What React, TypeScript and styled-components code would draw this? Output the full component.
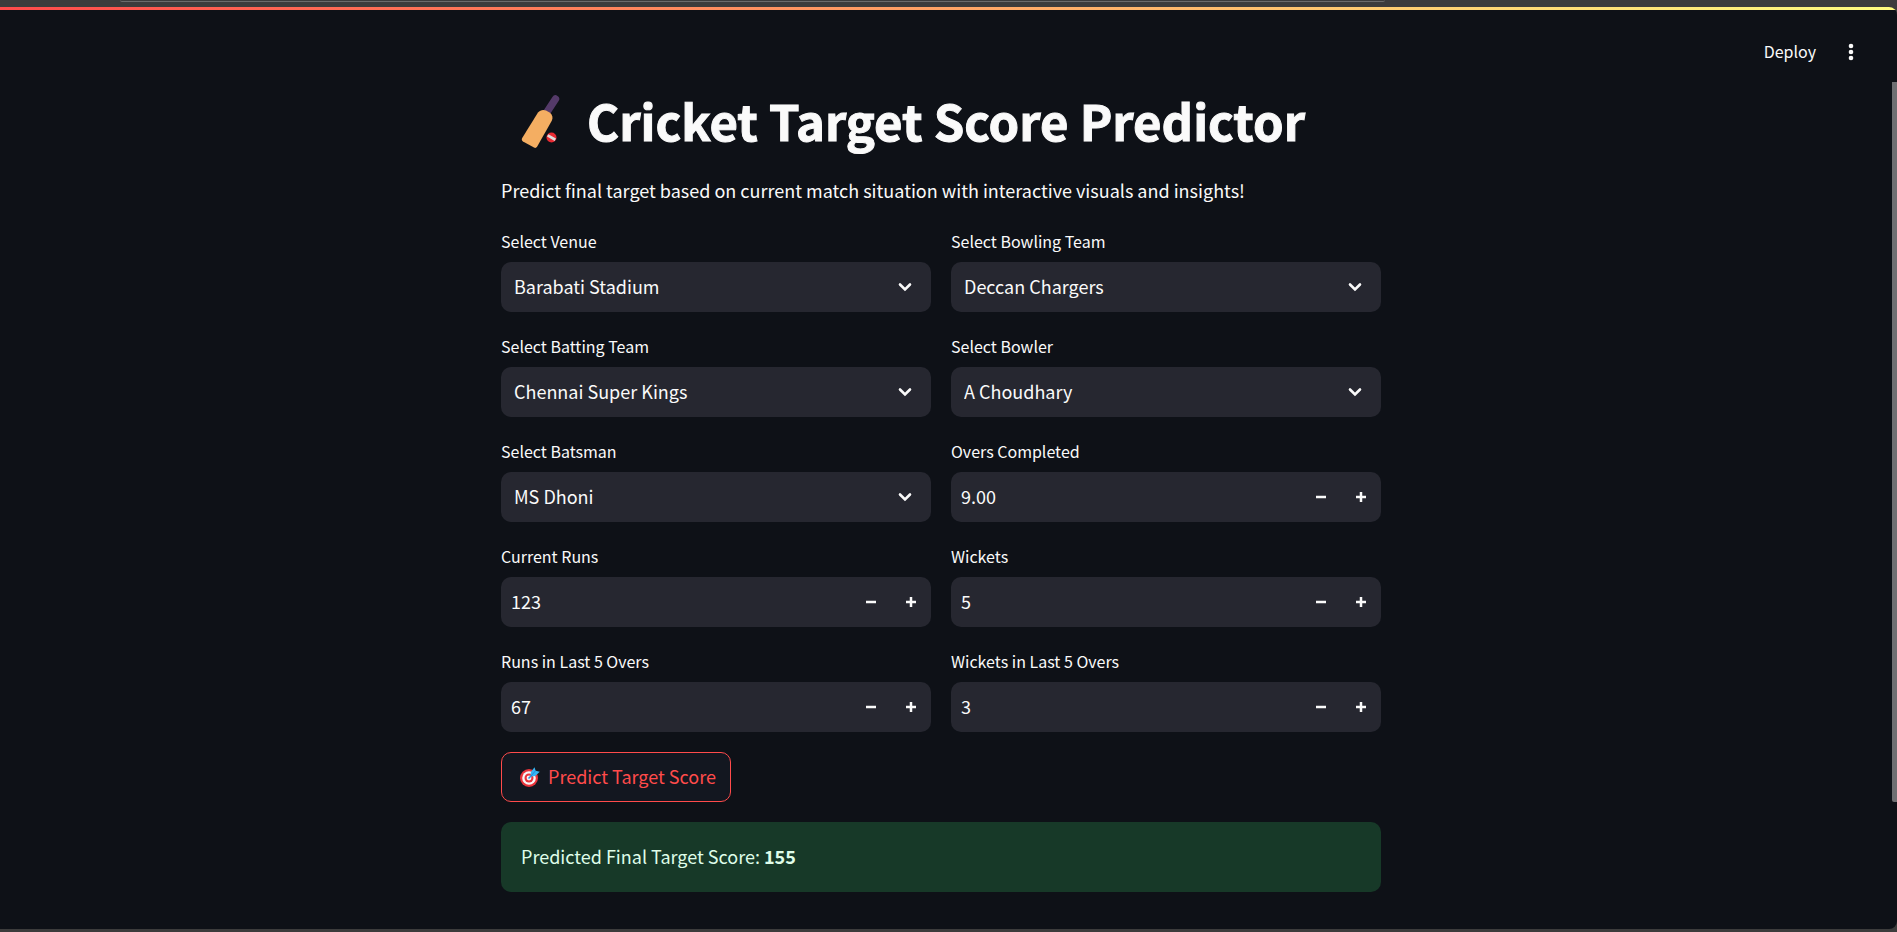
import React, { useId, useState } from "react";
import styled, { createGlobalStyle } from "styled-components";

const GlobalStyle = createGlobalStyle`
  *, *::before, *::after { box-sizing: border-box; }
  body {
    margin: 0;
    background: #3c3c3c;
    color: #fafafa;
    font-family: "Noto Sans CJK SC", "Noto Sans", sans-serif;
    font-size: 18px;
    line-height: 30px;
  }
  button, input, select { font: inherit; color: inherit; }
`;

const Window = styled.div`
  min-height: 100vh;
  display: flex;
  flex-direction: column;
  padding-bottom: 3px;
`;

const BrowserStrip = styled.div`
  height: 7px;
  padding: 0 512px 0 120px;
`;

const AddressBar = styled.div`
  height: 2px;
  border-bottom: 1px solid #6b6b6b;
  border-radius: 0 0 8px 8px;
`;

const Page = styled.div`
  flex: 1;
  display: flex;
  flex-direction: column;
  background: #0e1117;
  border-radius: 0 8px 8px 0;
  overflow: hidden;
`;

const Decoration = styled.div`
  height: 3px;
  background: linear-gradient(90deg, #ff4b4b, #fffd80);
`;

const Toolbar = styled.header`
  height: 72px;
  display: flex;
  align-items: center;
  justify-content: flex-end;
  gap: 23px;
  padding: 12px 34px 0 0;
`;

const ToolbarButton = styled.button`
  border: 0;
  background: none;
  padding: 0 0 2px;
  font-size: 16px;
  line-height: 24px;
  cursor: pointer;
`;

const MenuButton = styled(ToolbarButton)`
  width: 24px;
  height: 24px;
  padding: 0;
`;

const Body = styled.div`
  flex: 1;
  display: flex;
`;

const ScrollRail = styled.div`
  width: 5px;
`;

const ScrollThumb = styled.div`
  height: 85%;
  background: #6f6f72;
  border-radius: 0 0 0 2px;
`;

const Main = styled.main`
  flex: 1;
  padding: 0 30px 37px 20px;
`;

const Block = styled.div`
  max-width: 880px;
  margin: 0 auto;
  display: flex;
  flex-direction: column;
  align-items: flex-start;
  gap: 20px;
`;

const Title = styled.h1`
  margin: 0;
  height: 73px;
  padding: 3px 0 0 18px;
  display: flex;
  align-items: center;
  gap: 26px;
  font-size: 49px;
  line-height: 66px;
  font-weight: 700;
  -webkit-text-stroke: 1px #fafafa;
  white-space: nowrap;

  svg { -webkit-text-stroke: 0; }
`;

const Intro = styled.p`
  margin: 0 0 2px;
`;

const Fields = styled.div`
  width: 100%;
  display: grid;
  grid-template-columns: 1fr 1fr;
  gap: 20px;
`;

const Label = styled.label`
  display: block;
  margin-bottom: 7px;
  font-size: 16px;
  line-height: 28px;
`;

const Control = styled.div`
  height: 50px;
  display: flex;
  align-items: center;
  background: #262730;
  border-radius: 10px;
  overflow: hidden;
`;

const SelectControl = styled(Control)`
  display: grid;
  grid-template-columns: 1fr 52px;

  svg {
    grid-area: 1 / 2;
    justify-self: center;
    pointer-events: none;
  }
`;

const Select = styled.select`
  grid-area: 1 / 1 / 2 / 3;
  height: 50px;
  appearance: none;
  border: 0;
  outline: 0;
  background: none;
  padding: 0 52px 2px 13px;

  option { background: #262730; }
`;

const NumberInput = styled.input`
  flex: 1;
  min-width: 0;
  height: 50px;
  border: 0;
  outline: 0;
  background: none;
  padding: 0 10px 2px;
  appearance: textfield;

  &::-webkit-inner-spin-button { display: none; }
`;

const StepButton = styled.button`
  width: 40px;
  height: 50px;
  display: flex;
  align-items: center;
  justify-content: center;
  border: 0;
  padding: 0;
  background: none;
  cursor: pointer;
`;

const PredictButton = styled.button`
  height: 50px;
  display: flex;
  align-items: center;
  gap: 7px;
  padding: 0 14px 2px 17px;
  border: 1px solid #ff4b4b;
  border-radius: 10px;
  background: #131720;
  color: #ff4b4b;
  cursor: pointer;
`;

const Result = styled.div`
  width: 100%;
  padding: 19px 20px 21px;
  border-radius: 10px;
  background: #173928;
  color: #dffde9;
`;

const BatIcon = () => (
  <svg width="42" height="60" viewBox="0 -2 42 60" aria-hidden="true">
    <path d="M28 20 36.500 7" stroke="#543a69" strokeWidth="7.400" strokeLinecap="round" />
    <path
      d="M19 20.500C21 18 24 17.300 27 18.400L31 20.800C33.500 22.800 34.200 26 32.800 28.800L18.200 54.600C17.300 56 16.300 56.200 15 55.600L4 49.400C2.600 48.500 2.500 47.200 3.200 46Z"
      fill="#f4ae62"
    />
    <circle cx="32.500" cy="45.500" r="5" fill="#ea2a33" />
    <path d="m28.700 43.400 7.600 4.300" stroke="#dedede" strokeWidth="2.800" />
  </svg>
);

const TargetIcon = () => (
  <svg width="22" height="24" viewBox="0 -2 22 24" aria-hidden="true">
    <circle cx="10" cy="12" r="9" fill="#e9343b" />
    <circle cx="10" cy="12" r="6.800" fill="#f7f7f7" />
    <circle cx="10" cy="12" r="4.500" fill="#e9343b" />
    <circle cx="10" cy="12" r="2.400" fill="#f7f7f7" />
    <path d="m9.500 12.500 4-4" stroke="#2d8fe0" strokeWidth="1.600" />
    <path d="M11.500 10.500 11.800 6.300 15.500 1.300 16.600 4.700 20.800 5.800 16.200 9.900Z" fill="#35b6f4" />
    <path d="m12 10 4.600-5.300" stroke="#2686dc" strokeWidth="1" />
  </svg>
);

const Chevron = () => (
  <svg width="16" height="16" viewBox="0 0 16 16" fill="none" aria-hidden="true">
    <path d="m3 5.500 5 5 5-5" stroke="#fafafa" strokeWidth="2.600" strokeLinecap="round" strokeLinejoin="miter" />
  </svg>
);

const Minus = () => (
  <svg width="10" height="10" viewBox="0 0 10 10" aria-hidden="true">
    <path d="M0 5h10" stroke="#fafafa" strokeWidth="2.500" />
  </svg>
);

const Plus = () => (
  <svg width="10" height="10" viewBox="0 0 10 10" aria-hidden="true">
    <path d="M0 5h10M5 0v10" stroke="#fafafa" strokeWidth="2.500" />
  </svg>
);

const Dots = () => (
  <svg width="24" height="24" viewBox="0 0 24 24" fill="#fafafa" aria-hidden="true">
    <circle cx="12" cy="6" r="2.300" />
    <circle cx="12" cy="12" r="2.300" />
    <circle cx="12" cy="18" r="2.300" />
  </svg>
);

function SelectField({ label, value }: { label: string; value: string }) {
  const id = useId();
  return (
    <div>
      <Label htmlFor={id}>{label}</Label>
      <SelectControl>
        <Select id={id} defaultValue={value}>
          <option>{value}</option>
        </Select>
        <Chevron />
      </SelectControl>
    </div>
  );
}

function NumberField({ label, value, decimals = 0 }: { label: string; value: number; decimals?: number }) {
  const id = useId();
  const [text, setText] = useState(value.toFixed(decimals));
  const step = (by: number) => setText(Math.max(0, Number(text) + by).toFixed(decimals));
  return (
    <div>
      <Label htmlFor={id}>{label}</Label>
      <Control>
        <NumberInput id={id} type="number" value={text} onChange={(e) => setText(e.target.value)} />
        <StepButton type="button" aria-label={`Decrease ${label}`} onClick={() => step(-1)}>
          <Minus />
        </StepButton>
        <StepButton type="button" aria-label={`Increase ${label}`} onClick={() => step(1)}>
          <Plus />
        </StepButton>
      </Control>
    </div>
  );
}

export default function App() {
  return (
    <>
      <GlobalStyle />
      <Window>
        <BrowserStrip>
          <AddressBar />
        </BrowserStrip>
        <Page>
          <Decoration />
          <Toolbar>
            <ToolbarButton type="button">Deploy</ToolbarButton>
            <MenuButton type="button" aria-label="Main menu">
              <Dots />
            </MenuButton>
          </Toolbar>
          <Body>
            <Main>
              <Block>
                <Title>
                  <BatIcon />
                  Cricket Target Score Predictor
                </Title>
                <Intro>Predict final target based on current match situation with interactive visuals and insights!</Intro>
                <Fields>
                  <SelectField label="Select Venue" value="Barabati Stadium" />
                  <SelectField label="Select Bowling Team" value="Deccan Chargers" />
                  <SelectField label="Select Batting Team" value="Chennai Super Kings" />
                  <SelectField label="Select Bowler" value="A Choudhary" />
                  <SelectField label="Select Batsman" value="MS Dhoni" />
                  <NumberField label="Overs Completed" value={9} decimals={2} />
                  <NumberField label="Current Runs" value={123} />
                  <NumberField label="Wickets" value={5} />
                  <NumberField label="Runs in Last 5 Overs" value={67} />
                  <NumberField label="Wickets in Last 5 Overs" value={3} />
                </Fields>
                <PredictButton type="button">
                  <TargetIcon />
                  Predict Target Score
                </PredictButton>
                <Result role="status">
                  Predicted Final Target Score: <strong>155</strong>
                </Result>
              </Block>
            </Main>
            <ScrollRail>
              <ScrollThumb />
            </ScrollRail>
          </Body>
        </Page>
      </Window>
    </>
  );
}
